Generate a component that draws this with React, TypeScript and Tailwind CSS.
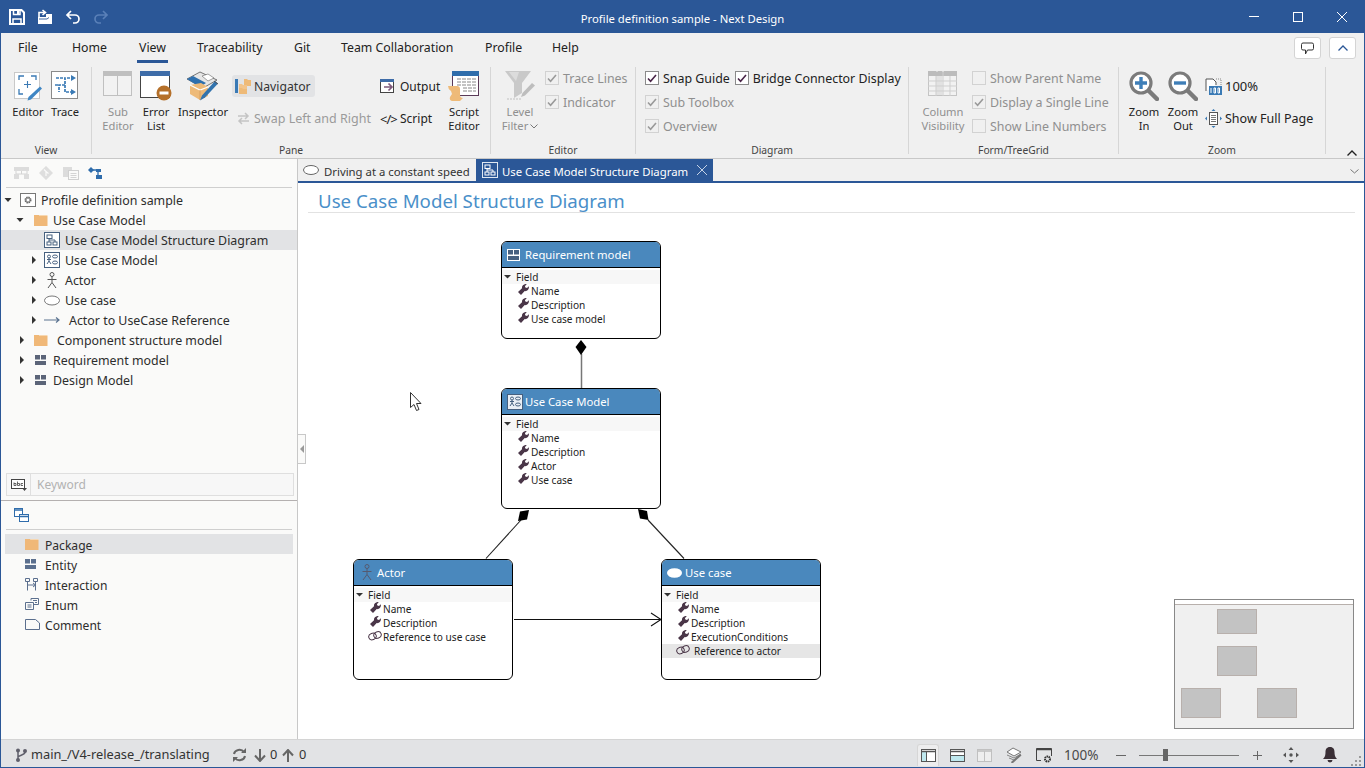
import React from "react";

const B = "#2b5797";

function IconSave() {
  return (
    <svg width="16" height="16" viewBox="0 0 16 16" fill="none">
      <path d="M1 1h11.500L15 3.500V15H1z" stroke="#fff" strokeWidth="2" />
      <path d="M4.500 1v4.500h6.500V1" stroke="#fff" strokeWidth="1.500" />
      <path d="M4 15V10h8v5" stroke="#fff" strokeWidth="1.500" />
      <rect x="8" y="2" width="2" height="3" fill="#fff" />
    </svg>
  );
}
function IconOpen() {
  return (
    <svg width="16" height="16" viewBox="0 0 16 16" fill="none">
      <path d="M1 8V15H15V5H9V8Z" fill="#fff" />
      <path d="M2 10h8l2-1.500" stroke={B} strokeWidth="0.900" />
      <path d="M2 8V3.500H8M5.500 1 8.500 3.500 5.500 6" stroke="#fff" strokeWidth="1.600" />
    </svg>
  );
}
function IconUndo({ dim }: { dim?: boolean }) {
  return (
    <svg width="16" height="16" viewBox="0 0 16 16" fill="none" className={dim ? "-scale-x-100" : ""}>
      <path d="M6 2 2 6l4 4M2 6h8a4 4 0 0 1 0 8H8" stroke={dim ? "#5a80b8" : "#fff"} strokeWidth="1.700" />
    </svg>
  );
}
function IconEditorBig() {
  return (
    <svg width="30" height="30" viewBox="0 0 30 30" fill="none">
      <rect x="1.500" y="1.500" width="25" height="26" fill="#fff" stroke="#9a9a9a" strokeDasharray="1 1" />
      <path d="M6 9V5h5M18 5h5v4M6 18v5h4" stroke="#3a7ab5" strokeWidth="1.300" />
      <path d="M14.500 10v7M11 13.500h7" stroke="#3a7ab5" strokeWidth="1.100" />
      <path d="M27 15.500l2 2-11 11-3.500 1 1-3.500z" fill="#3f86c4" />
    </svg>
  );
}
function IconTraceBig() {
  return (
    <svg width="28" height="28" viewBox="0 0 28 28" fill="none">
      <rect x="0.500" y="0.500" width="26" height="27" fill="#fff" stroke="#8a8a8a" />
      <path d="M5 7h9v14h7M14 14H8v7M4 14h4M16 7h5" stroke="#3a7ab5" strokeWidth="1.700" strokeDasharray="3 1" />
      <path d="M20 4l5 3-5 3zM20 18l5 3-5 3z" fill="#3a7ab5" />
    </svg>
  );
}
function IconSubEditor() {
  return (
    <svg width="30" height="26" viewBox="0 0 30 26" fill="none">
      <rect x="0.500" y="0.500" width="28" height="24" fill="#f2f2f2" stroke="#c0c0c0" />
      <rect x="0" y="0" width="29" height="5" fill="#bfbfbf" />
      <path d="M14.500 5v20" stroke="#c0c0c0" />
    </svg>
  );
}
function IconErrorList() {
  return (
    <svg width="32" height="30" viewBox="0 0 32 30" fill="none">
      <rect x="0.500" y="0.500" width="29" height="26" fill="#fff" stroke="#444" />
      <rect x="0" y="0" width="30" height="5" fill="#3e6ca8" />
      <circle cx="24" cy="22" r="7.500" fill="#b5702a" />
      <rect x="19.500" y="20.500" width="9" height="3" fill="#fff" />
    </svg>
  );
}
function IconInspector() {
  return (
    <svg width="34" height="32" viewBox="0 0 34 32" fill="none">
      <path d="M1 8L14 1l17 8-14 8z" fill="#e6e6e6" stroke="#555" strokeWidth="0.800" />
      <path d="M1 8l6-3 13 7-6 4z" fill="#2f70ae" />
      <path d="M16 5l6-2 6 4-6 3z" fill="#fff" stroke="#666" strokeWidth="0.600" />
      <path d="M4 14l11-2 7 4v9l-8 4-10-6z" fill="#eeba78" />
      <path d="M4 14l10 5 8-3" stroke="#fff" strokeWidth="1.200" />
      <path d="M14 19v10" stroke="#d9a15e" />
      <path d="M29 10l3 2.500-13 14-5 3 2-5z" fill="#3273ad" />
      <path d="M28 10l4 3" stroke="#555" />
    </svg>
  );
}
function IconNavigator() {
  return (
    <svg width="17" height="17" viewBox="0 0 17 17" fill="none">
      <rect x="0" y="1" width="3" height="14" fill="#3a7ab5" />
      <path d="M9 1h3l1 1h3v6H9z" fill="#eeba78" />
      <path d="M4 6h3l1 1h4v8H4z" fill="#f2c48c" />
      <path d="M4 10h3l1 1h4v5H4z" fill="#eeba78" />
    </svg>
  );
}
function IconOutput() {
  return (
    <svg width="16" height="15" viewBox="0 0 16 15" fill="none">
      <rect x="0.500" y="0.500" width="13" height="13" fill="#fff" stroke="#444" />
      <rect x="0" y="0" width="14" height="3" fill="#3e6ca8" />
      <path d="M4 8h7M8.500 4.500L12 8 8.500 11.500" stroke="#7e5a7c" strokeWidth="1.700" />
    </svg>
  );
}
function IconScriptEditor() {
  return (
    <svg width="32" height="32" viewBox="0 0 32 32" fill="none">
      <rect x="4.500" y="0.500" width="26" height="24" fill="#fff" stroke="#5a3a58" />
      <rect x="4" y="0" width="27" height="5" fill="#2f6dab" />
      <path d="M9 8h19M9 11h19M9 14h19M15 17h13M15 20h13" stroke="#888" strokeDasharray="4 1" />
      <path d="M0 15h9q3 0 3 3v6q0 3 3 3l-3 3H4q-3-1-2-4l2-3-1-3q-3-2-3-5z" fill="#eeba78" />
    </svg>
  );
}
function IconFunnel() {
  return (
    <svg width="32" height="30" viewBox="0 0 32 30" fill="none">
      <path d="M1 0h26L18 12v10l-8 5V12z" fill="#c9c9c9" />
      <path d="M5 1h10L12 10z" fill="#dcdcdc" />
      <path d="M28 12l3 2.500-10 10-4 1.500 1.500-4z" fill="#bdbdbd" />
      <path d="M3 28h14" stroke="#c0c0c0" strokeDasharray="2 1" />
    </svg>
  );
}
function IconColumns() {
  return (
    <svg width="30" height="26" viewBox="0 0 30 26" fill="none">
      <rect x="0.500" y="0.500" width="28" height="24" fill="#f2f2f2" stroke="#c4c4c4" />
      <rect x="0" y="0" width="29" height="5" fill="#bcbcbc" />
      <rect x="8" y="0" width="6" height="25" fill="#bcbcbc" opacity="0.300" />
      <path d="M0 10h29M0 15h29M0 20h29M8 5v20M15 0v25M22 5v20" stroke="#cfcfcf" />
      <path d="M8 0h2M14 0h2" stroke="#eee" />
    </svg>
  );
}
function IconZoom({ plus }: { plus?: boolean }) {
  return (
    <svg width="30" height="30" viewBox="0 0 30 30" fill="none">
      <path d="M19 19l9 9" stroke="#7b7b7b" strokeWidth="4.500" strokeLinecap="round" />
      <circle cx="12" cy="12" r="10" fill="#fff" stroke="#7b7b7b" strokeWidth="3.200" />
      <path d={plus ? "M6 12h12M12 6v12" : "M6 12h12"} stroke="#3f7fb8" strokeWidth="3.400" />
    </svg>
  );
}
function IconPage100() {
  return (
    <svg width="17" height="17" viewBox="0 0 17 17" fill="none">
      <path d="M1 13V1h7l3 3v3" stroke="#555" fill="#fff" />
      <path d="M11 1h5v6" stroke="#888" strokeDasharray="1 1" />
      <rect x="4" y="8" width="13" height="9" fill="#3a7ab5" />
      <path d="M6 10v5M9 10h1.500v5H9zM13 10h1.500v5H13z" stroke="#fff" />
    </svg>
  );
}
function IconFullPage() {
  return (
    <svg width="17" height="19" viewBox="0 0 17 19" fill="none">
      <rect x="4.500" y="3.500" width="8" height="12" fill="#fff" stroke="#555" />
      <path d="M6 6.500h5M6 8.500h5M6 10.500h5M6 12.500h5" stroke="#777" />
      <path d="M8.500 0l2 2h-4zM8.500 19l2-2h-4zM0 9.500l2-2v4zM17 9.500l-2-2v4z" fill="#3a7ab5" />
    </svg>
  );
}
function Check({ on, dis }: { on?: boolean; dis?: boolean }) {
  const box = dis
    ? "w-[14px] h-[14px] border border-[#d2d2d2] bg-[#f0f0f0] shrink-0 flex items-center justify-center"
    : "w-[14px] h-[14px] border border-[#8b8b8b] bg-white shrink-0 flex items-center justify-center";
  return (
    <span className={box}>
      {on && (
        <svg width="10" height="9" viewBox="0 0 10 9" fill="none">
          <path d="M1 4.500 3.600 7.300 9 1" stroke={dis ? "#9a9a9a" : "#4a2548"} strokeWidth="1.600" />
        </svg>
      )}
    </span>
  );
}
function CheckRow({ on, dis, label }: { on?: boolean; dis?: boolean; label: string }) {
  return (
    <div className={dis ? "h-[22px] flex items-center gap-[4px] text-[#8f8f8f]" : "h-[22px] flex items-center gap-[4px] text-[#222]"}>
      <Check on={on} dis={dis} />
      <span className="whitespace-nowrap text-[12.4px] pt-[2px]">{label}</span>
    </div>
  );
}
function Big({ w, icon, l1, l2, dis }: { w: string; icon: React.ReactNode; l1: React.ReactNode; l2?: React.ReactNode; dis?: boolean }) {
  return (
    <div className={`${w} flex flex-col items-center shrink-0 text-[11.2px] ${dis ? "text-[#8f8f8f]" : "text-[#222]"}`}>
      <div className="h-[38px] pt-[4px] flex items-start justify-center">{icon}</div>
      <div className="leading-[14px] text-center whitespace-nowrap">{l1}</div>
      {l2 && <div className="leading-[14px] text-center whitespace-nowrap">{l2}</div>}
    </div>
  );
}
function Group({ w, title, children }: { w: string; title: string; children: React.ReactNode }) {
  return (
    <div className={`${w} h-[91px] shrink-0 flex flex-col`}>
      <div className="h-[76px] flex items-start">{children}</div>
      <div className="h-[14px] leading-[14px] text-center text-[#444] text-[10.3px]">{title}</div>
    </div>
  );
}
function Sep() {
  return <div className="w-px h-[87px] bg-[#d6d6d6] shrink-0" />;
}

function Ribbon() {
  return (
    <div className="bg-[#f0f0f0] text-[12px]">
      <div className="h-[30px] flex items-start text-[#222] text-[12.3px]">
        <div className="w-[54px] ml-[17px] pt-[7px] leading-4">File</div>
        <div className="w-[65px] pt-[7px] leading-4">Home</div>
        <div className="w-[31px] h-[30px] pt-[7px] leading-4 text-center border-b-[3px] border-[#2b5797]">View</div>
        <div className="w-[97px] ml-[29px] pt-[7px] leading-4">Traceability</div>
        <div className="w-[47px] pt-[7px] leading-4">Git</div>
        <div className="w-[144px] pt-[7px] leading-4 whitespace-nowrap">Team Collaboration</div>
        <div className="w-[67px] pt-[7px] leading-4">Profile</div>
        <div className="pt-[7px] leading-4">Help</div>
        <div className="ml-auto mr-[8px] mt-[4px] flex gap-[8px]">
          <div className="w-[27px] h-[22px] bg-white border border-[#d4d4d4] rounded-[3px] flex items-center justify-center">
            <svg width="13" height="13" viewBox="0 0 13 13" fill="none">
              <path d="M2 1h9a1.500 1.500 0 0 1 1.500 1.500v4A1.500 1.500 0 0 1 11 8H6.500L4.500 12V8H2A1.500 1.500 0 0 1 .5 6.500v-4A1.500 1.500 0 0 1 2 1z" stroke="#333" />
            </svg>
          </div>
          <div className="w-[27px] h-[22px] bg-white border border-[#d4d4d4] rounded-[3px] flex items-center justify-center">
            <svg width="10" height="6" viewBox="0 0 10 6" fill="none">
              <path d="M.5 5.500 5 1l4.500 4.500" stroke="#2b5797" strokeWidth="1.300" />
            </svg>
          </div>
        </div>
      </div>
      <div className="h-[95px] pt-[4px] flex items-start">
        <Group w="w-[90px]" title="View">
          <div className="ml-[10px]" />
          <Big w="w-[34px]" icon={<IconEditorBig />} l1="Editor" />
          <div className="ml-[3px]" />
          <Big w="w-[34px]" icon={<IconTraceBig />} l1="Trace" />
        </Group>
        <Sep />
        <Group w="w-[398px]" title="Pane">
          <div className="ml-[6px]" />
          <Big w="w-[40px]" dis icon={<IconSubEditor />} l1="Sub" l2="Editor" />
          <Big w="w-[36px]" icon={<IconErrorList />} l1="Error" l2="List" />
          <Big w="w-[58px]" icon={<IconInspector />} l1="Inspector" />
          <div className="w-[148px] pt-[8px] shrink-0">
            <div className="w-[83px] h-[22px] bg-[#e2e3e5] rounded-[3px] flex items-center pl-[3px] gap-[2px] text-[#333]">
              <IconNavigator />
              <span className="text-[12.2px] pt-[2px]">Navigator</span>
            </div>
            <div className="h-[22px] mt-[10px] flex items-center pl-[5px] gap-[4px] text-[#9b9b9b] whitespace-nowrap">
              <svg width="13" height="13" viewBox="0 0 13 13" fill="none">
                <path d="M1 4h10M8 1l3 3-3 3M12 9H2M5 6 2 9l3 3" stroke="#c4c4c4" strokeWidth="1.500" />
              </svg>
              <span className="text-[12.5px] pt-[2px]">Swap Left and Right</span>
            </div>
          </div>
          <div className="w-[64px] pt-[8px] shrink-0 text-[#222]">
            <div className="h-[22px] flex items-center gap-[4px]">
              <IconOutput />
              <span className="pt-[2px]">Output</span>
            </div>
            <div className="h-[22px] mt-[10px] flex items-center gap-[4px]">
              <span className="w-[16px] text-[13px] leading-none text-center tracking-[-1px] whitespace-nowrap pt-[2px]">&lt;/&gt;</span>
              <span className="pt-[2px]">Script</span>
            </div>
          </div>
          <Big w="w-[40px]" icon={<IconScriptEditor />} l1="Script" l2="Editor" />
        </Group>
        <Sep />
        <Group w="w-[144px]" title="Editor">
          <div className="ml-[9px]" />
          <Big
            w="w-[40px]"
            dis
            icon={<IconFunnel />}
            l1="Level"
            l2={
              <span className="inline-flex items-center gap-[2px]">
                Filter
                <svg width="8" height="5" viewBox="0 0 8 5" fill="none">
                  <path d="M.5.5 4 4 7.500.5" stroke="#777" />
                </svg>
              </span>
            }
          />
          <div className="ml-[5px] flex flex-col gap-[2px]">
            <CheckRow on dis label="Trace Lines" />
            <CheckRow on dis label="Indicator" />
          </div>
        </Group>
        <Sep />
        <Group w="w-[272px]" title="Diagram">
          <div className="ml-[9px] flex flex-col gap-[2px]">
            <div className="flex gap-[5px]">
              <CheckRow on label="Snap Guide" />
              <CheckRow on label="Bridge Connector Display" />
            </div>
            <CheckRow on dis label="Sub Toolbox" />
            <CheckRow on dis label="Overview" />
          </div>
        </Group>
        <Sep />
        <Group w="w-[209px]" title="Form/TreeGrid">
          <div className="ml-[5px]" />
          <Big w="w-[58px]" dis icon={<IconColumns />} l1="Column" l2="Visibility" />
          <div className="flex flex-col gap-[2px]">
            <CheckRow dis label="Show Parent Name" />
            <CheckRow on dis label="Display a Single Line" />
            <CheckRow dis label="Show Line Numbers" />
          </div>
        </Group>
        <Sep />
        <Group w="w-[206px]" title="Zoom">
          <div className="ml-[6px]" />
          <Big w="w-[38px]" icon={<IconZoom plus />} l1="Zoom" l2="In" />
          <div className="ml-[1px]" />
          <Big w="w-[38px]" icon={<IconZoom />} l1="Zoom" l2="Out" />
          <div className="ml-[3px] pt-[8px] text-[#222]">
            <div className="h-[22px] flex items-center gap-[3px]">
              <IconPage100 />
              <span className="text-[13px] pt-[2px]">100%</span>
            </div>
            <div className="h-[22px] mt-[10px] flex items-center gap-[3px] whitespace-nowrap">
              <IconFullPage />
              <span className="text-[12.5px] pt-[2px]">Show Full Page</span>
            </div>
          </div>
        </Group>
        <Sep />
        <svg className="ml-[21px] mt-[83px]" width="10" height="6" viewBox="0 0 10 6" fill="none">
          <path d="M.5 5.500 5 1l4.500 4.500" stroke="#222" strokeWidth="1.400" />
        </svg>
      </div>
    </div>
  );
}

function ArrowDown() {
  return (
    <svg width="12" height="8" viewBox="0 0 12 8">
      <path d="M2.500 2h7L6 6z" fill="#333" />
    </svg>
  );
}
function ArrowRight() {
  return (
    <svg width="12" height="10" viewBox="0 0 12 10">
      <path d="M4 1l4 4-4 4z" fill="#333" />
    </svg>
  );
}
function Folder() {
  return (
    <svg width="14" height="12" viewBox="0 0 14 12">
      <path d="M0 1h5l1 1h7.500v10H0z" fill="#f0b878" />
      <path d="M5 1h8.500v1H6z" fill="#f7d7b0" />
    </svg>
  );
}
function DiagramIcon() {
  return (
    <svg width="16" height="16" viewBox="0 0 16 16" fill="none">
      <rect x=".5" y=".5" width="15" height="15" stroke="#46607f" fill="#fff" />
      <rect x="3" y="3" width="5" height="3.500" stroke="#46607f" />
      <rect x="3" y="10" width="4" height="3" stroke="#46607f" />
      <rect x="9" y="10" width="4" height="3" stroke="#46607f" />
      <path d="M5 6.500V10M5 8h6v2" stroke="#46607f" />
    </svg>
  );
}
function UCMIcon({ c = "#46607f", bg = "#fff" }: { c?: string; bg?: string }) {
  return (
    <svg width="16" height="16" viewBox="0 0 16 16" fill="none">
      <rect x=".5" y=".5" width="15" height="15" stroke={c} fill={bg} />
      <circle cx="5" cy="4.500" r="1.500" stroke={c} />
      <path d="M5 6v3M3 7.500h4M3 12l2-3 2 3" stroke={c} />
      <ellipse cx="11" cy="4.500" rx="2.500" ry="1.500" stroke={c} />
      <ellipse cx="11" cy="10.500" rx="2.500" ry="1.500" stroke={c} />
    </svg>
  );
}
function ActorIcon({ c = "#555" }: { c?: string }) {
  return (
    <svg width="10" height="17" viewBox="0 0 10 17" fill="none">
      <circle cx="5" cy="2.500" r="2" stroke={c} />
      <path d="M5 4.500v6M.5 7.500h9M1 16l4-5.500L9 16" stroke={c} />
    </svg>
  );
}
function EllipseIcon() {
  return (
    <svg width="16" height="11" viewBox="0 0 16 11" fill="none">
      <ellipse cx="8" cy="5.500" rx="7.500" ry="4.500" stroke="#777" fill="#fff" />
    </svg>
  );
}
function RefArrow() {
  return (
    <svg width="16" height="8" viewBox="0 0 16 8" fill="none">
      <path d="M0 4h15M12 1.500 15 4l-3 2.500" stroke="#5b7390" strokeWidth="1.200" />
    </svg>
  );
}
function EntityIcon({ c = "#5b6478" }: { c?: string }) {
  return (
    <svg width="11" height="10" viewBox="0 0 11 10">
      <rect width="5" height="4.500" fill={c} />
      <rect x="6" width="5" height="4.500" fill={c} />
      <rect y="6" width="11" height="4" fill={c} />
    </svg>
  );
}
function EntityHeader() {
  return (
    <svg width="13" height="12" viewBox="0 0 13 12">
      <rect width="13" height="12" fill="#fff" />
      <rect x="1" y="1" width="5" height="4.500" fill="#46607f" />
      <rect x="7" y="1" width="5" height="4.500" fill="#46607f" />
      <rect x="1" y="7" width="11" height="4" fill="#46607f" />
    </svg>
  );
}
function ProfileIcon() {
  return (
    <svg width="16" height="14" viewBox="0 0 16 14" fill="none">
      <rect x=".5" y=".5" width="15" height="13" stroke="#777" fill="#fff" />
      <circle cx="8" cy="7" r="2.800" stroke="#666" strokeWidth="1.400" strokeDasharray="1.500 .7" />
      <circle cx="8" cy="7" r="2" stroke="#666" strokeWidth="0.800" />
    </svg>
  );
}

function TreeRow({ pl, slot, ipl, arrow, icon, text, sel }: { pl: string; slot: string; ipl: string; arrow?: "d" | "r"; icon: React.ReactNode; text: string; sel?: boolean }) {
  return (
    <div className={`h-[20px] flex items-center ${pl} ${sel ? "bg-[#e2e3e5]" : ""}`}>
      <span className="w-[12px] shrink-0 flex justify-center">{arrow === "d" ? <ArrowDown /> : arrow === "r" ? <ArrowRight /> : null}</span>
      <span className={`${slot} ${ipl} shrink-0 flex items-center`}>{icon}</span>
      <span className="whitespace-nowrap text-[12.4px] pt-[2px]">{text}</span>
    </div>
  );
}
function ToolRow({ icon, text, sel }: { icon: React.ReactNode; text: string; sel?: boolean }) {
  return (
    <div className={`h-[20px] flex items-center mx-[4px] w-[288px] ${sel ? "bg-[#e2e3e5]" : ""}`}>
      <span className="w-[40px] pl-[20px] shrink-0 flex items-center">{icon}</span>
      <span className="text-[12.1px] pt-[4px]">{text}</span>
    </div>
  );
}

function LeftPanel() {
  return (
    <div className="w-[297px] shrink-0 h-full bg-[#fafaf9] border-r border-[#c8c8c8] flex flex-col text-[12px] text-[#2d2d2d]">
      <div className="flex-1 flex flex-col min-h-0">
        <div className="h-[28px] flex items-center pl-[13px] gap-[10px] shrink-0">
          <svg width="15" height="12" viewBox="0 0 15 12" fill="none">
            <rect x="0" y="0" width="15" height="4" fill="#dcdcdc" />
            <path d="M2 4v3h11V4M7.500 4v3" stroke="#d4d4d4" />
            <rect x="0" y="7" width="5" height="5" fill="#dcdcdc" />
            <rect x="10" y="7" width="5" height="5" fill="#dcdcdc" />
          </svg>
          <svg width="14" height="14" viewBox="0 0 14 14">
            <rect x="2" y="2" width="10" height="10" fill="#dedede" transform="rotate(45 7 7)" />
            <path d="M5 3.500 7 5.500V10M7 5.500l2.500 2" stroke="#fafaf9" strokeWidth="1.200" fill="none" />
          </svg>
          <svg width="16" height="14" viewBox="0 0 16 14" fill="none">
            <rect x="0" y="1" width="9" height="10" fill="#dcdcdc" />
            <rect x="5.500" y="4.500" width="10" height="9" fill="#fafaf9" stroke="#d0d0d0" />
            <path d="M7.500 7.500h6M7.500 9.500h6M7.500 11.500h6" stroke="#d4d4d4" />
          </svg>
          <svg width="15" height="15" viewBox="0 0 15 15" fill="none" className="-ml-[1px]">
            <path d="M0 4 3 1l3 3-3 3z" fill="#2f6cab" />
            <path d="M4 4h6v7" stroke="#2f6cab" strokeWidth="1.300" />
            <path d="M8 3h5v3H8zM8 9h6v4H8z" fill="#2f6cab" />
          </svg>
        </div>
        <div className="h-px bg-[#cfcfcf] mx-[5px] w-[286px] shrink-0" />
        <div className="pt-[2px]">
          <TreeRow pl="pl-[1px]" slot="w-[27px]" ipl="pl-[6px]" arrow="d" icon={<ProfileIcon />} text="Profile definition sample" />
          <TreeRow pl="pl-[13px]" slot="w-[27px]" ipl="pl-[8px]" arrow="d" icon={<Folder />} text="Use Case Model" />
          <TreeRow sel pl="pl-[27px]" slot="w-[25px]" ipl="pl-[4px]" icon={<DiagramIcon />} text="Use Case Model Structure Diagram" />
          <TreeRow pl="pl-[27px]" slot="w-[25px]" ipl="pl-[4px]" arrow="r" icon={<UCMIcon />} text="Use Case Model" />
          <TreeRow pl="pl-[27px]" slot="w-[25px]" ipl="pl-[7px]" arrow="r" icon={<ActorIcon />} text="Actor" />
          <TreeRow pl="pl-[27px]" slot="w-[25px]" ipl="pl-[4px]" arrow="r" icon={<EllipseIcon />} text="Use case" />
          <TreeRow pl="pl-[27px]" slot="w-[29px]" ipl="pl-[4px]" arrow="r" icon={<RefArrow />} text="Actor to UseCase Reference" />
          <TreeRow pl="pl-[15px]" slot="w-[29px]" ipl="pl-[6px]" arrow="r" icon={<Folder />} text="Component structure model" />
          <TreeRow pl="pl-[15px]" slot="w-[25px]" ipl="pl-[7px]" arrow="r" icon={<EntityIcon />} text="Requirement model" />
          <TreeRow pl="pl-[15px]" slot="w-[25px]" ipl="pl-[7px]" arrow="r" icon={<EntityIcon />} text="Design Model" />
        </div>
        <div className="flex-1" />
        <div className="h-[23px] mx-[5px] w-[288px] mb-[4px] border border-[#dfdfdf] bg-[#f7f7f7] flex items-center shrink-0">
          <span className="w-[24px] h-full border-r border-[#dfdfdf] flex items-center justify-center">
            <svg width="16" height="13" viewBox="0 0 16 13" fill="none">
              <rect x=".5" y="1.500" width="13" height="9" stroke="#444" fill="#fff" />
              <path d="M3 4.500v3h2v-2H3M6.500 3.500v4h2v-2h-2M12 5.500h-2v2h2" stroke="#444" strokeWidth="0.800" />
              <path d="M11 10h5l-2.500 3z" fill="#444" />
            </svg>
          </span>
          <span className="pl-[6px] text-[#b2b2b2]">Keyword</span>
        </div>
      </div>
      <div className="h-[239px] shrink-0 border-t border-[#b4b0b0]">
        <div className="h-[28px] flex items-center pl-[13px]">
          <svg width="15" height="14" viewBox="0 0 15 14" fill="none">
            <rect x=".5" y=".5" width="8" height="8" stroke="#2f6cab" fill="#fff" />
            <rect x="5.500" y="6.500" width="9" height="7" stroke="#2f6cab" fill="#fff" />
            <path d="M.5 2h8M5.500 8.500h9" stroke="#2f6cab" strokeWidth="1.500" />
          </svg>
        </div>
        <div className="h-px bg-[#cfcfcf] mx-[5px] w-[286px]" />
        <div className="pt-[4px]">
          <ToolRow sel icon={<Folder />} text="Package" />
          <ToolRow icon={<EntityIcon c="#5b6f8e" />} text="Entity" />
          <ToolRow
            icon={
              <svg width="14" height="13" viewBox="0 0 14 13" fill="none">
                <path d="M.5.5h4v3h-4zM8.500.5h4v3h-4zM2.500 3.500v9M10.500 3.500v9M2.500 7h8M8 5l2.500 2L8 9" stroke="#5b6f8e" />
              </svg>
            }
            text="Interaction"
          />
          <ToolRow
            icon={
              <svg width="14" height="12" viewBox="0 0 14 12" fill="none">
                <path d="M.5 4.500h8v7h-8zM2.500 7h4M2.500 9h4M6 2.500V.5h7.500v6H9M8 2.500h4M10 4.500h2" stroke="#5b6f8e" />
              </svg>
            }
            text="Enum"
          />
          <ToolRow
            icon={
              <svg width="15" height="11" viewBox="0 0 15 11" fill="none">
                <path d="M.500.500h10l4 3.500v6.500H.500z" stroke="#5b6f8e" />
              </svg>
            }
            text="Comment"
          />
        </div>
      </div>
    </div>
  );
}

function Wrench() {
  return (
    <svg width="11" height="11" viewBox="0 0 11 11" className="shrink-0">
      <path d="M0 8 4 4.300C3.500 1.800 6 -.4 8.800 0L6.900 2.200 7.400 3.600 9 4.100 10.900 2.300C11.400 5.500 8.800 7.800 6.700 7.100L3 11z" fill="#4a3648" />
    </svg>
  );
}
function LinkIcon() {
  return (
    <svg width="14" height="10" viewBox="0 0 14 10" fill="none" className="shrink-0">
      <ellipse cx="4.500" cy="5.500" rx="3.800" ry="3.200" stroke="#4a3648" transform="rotate(-20 4.500 5.500)" />
      <ellipse cx="9.500" cy="4" rx="3.800" ry="3.200" stroke="#4a3648" transform="rotate(-20 9.500 4)" />
    </svg>
  );
}
type F = { t: string; link?: boolean; sel?: boolean };
function Node({ pos, title, icon, fields }: { pos: string; title: string; icon: React.ReactNode; fields: F[] }) {
  return (
    <div className={`absolute ${pos} w-[160px] bg-white border border-black rounded-[6px] overflow-hidden text-[10.1px] text-[#222]`}>
      <div className="h-[26px] bg-[#4a88bd] border-b border-black flex items-center text-white text-[11.3px]">
        <span className="w-[23px] pl-[5px] shrink-0 flex items-center">{icon}</span>
        <span className="pt-[2px]">{title}</span>
      </div>
      <div className="mt-[2px] h-[14px] bg-[#f7f7f7] flex items-center leading-[14px]">
        <span className="w-[14px] shrink-0 flex items-center">
          <svg width="10" height="6" viewBox="0 0 10 6" className="ml-[1px]">
            <path d="M1 1h7L4.500 4.500z" fill="#333" />
          </svg>
        </span>
        <span>Field</span>
      </div>
      {fields.map((f) => (
        <div key={f.t} className={`h-[14px] flex items-center leading-[14px] whitespace-nowrap ${f.sel ? "bg-[#e6e6e6]" : ""}`}>
          <span className={`${f.link ? "pl-[14px]" : "pl-[16px]"} ${f.sel ? "w-[32px]" : "w-[29px]"} shrink-0 flex items-center -mt-[3px]`}>{f.link ? <LinkIcon /> : <Wrench />}</span>
          <span>{f.t}</span>
        </div>
      ))}
    </div>
  );
}

function Canvas() {
  return (
    <div className="flex-1 relative bg-white min-h-0 overflow-hidden">
      <div className="pt-[7px] pl-[20px] text-[18.7px] leading-[22px] text-[#4a8fc9]">Use Case Model Structure Diagram</div>
      <div className="h-px bg-[#e2e2e2] ml-[10px] mr-[9px]" />
      <svg className="absolute inset-0 pointer-events-none" width="1066" height="556" viewBox="298 183 1066 556" fill="none">
        <path d="M581.500 354V388" stroke="#777" strokeWidth="1.500" />
        <path d="M581 340l5.500 7-5.500 8-5.500-8z" fill="#000" />
        <path d="M486 558.500 521 520" stroke="#222" strokeWidth="1.100" />
        <path d="M529 510l-2 9.500-9 1.500 2-9.500z" fill="#000" />
        <path d="M684 558.500 648 520" stroke="#222" strokeWidth="1.100" />
        <path d="M638 509l9 2 1.500 9-8.500-1.500z" fill="#000" />
        <path d="M514 619.500h147M651 613l10 6.500-10 6.500" stroke="#111" strokeWidth="1.100" />
        <path d="M410.500 392.500v15l3.500-3 2.500 6 2.500-1-2.500-6h4.500z" fill="#fff" stroke="#333" />
      </svg>
      <Node
        pos="left-[203px] top-[58px] h-[98px]"
        title="Requirement model"
        icon={<EntityHeader />}
        fields={[{ t: "Name" }, { t: "Description" }, { t: "Use case model" }]}
      />
      <Node
        pos="left-[203px] top-[205px] h-[121px]"
        title="Use Case Model"
        icon={<UCMIcon c="#46607f" bg="#e9eef4" />}
        fields={[{ t: "Name" }, { t: "Description" }, { t: "Actor" }, { t: "Use case" }]}
      />
      <Node
        pos="left-[55px] top-[376px] h-[121px]"
        title="Actor"
        icon={<span className="pl-[3px]"><ActorIcon c="#555a70" /></span>}
        fields={[{ t: "Name" }, { t: "Description" }, { t: "Reference to use case", link: true }]}
      />
      <Node
        pos="left-[363px] top-[376px] h-[121px]"
        title="Use case"
        icon={
          <svg width="15" height="10" viewBox="0 0 15 10">
            <ellipse cx="7.500" cy="5" rx="7.500" ry="4.800" fill="#fff" />
          </svg>
        }
        fields={[{ t: "Name" }, { t: "Description" }, { t: "ExecutionConditions" }, { t: "Reference to actor", link: true, sel: true }]}
      />
      <div className="absolute left-0 top-[251px] w-[8px] h-[30px] bg-[#fafaf9] border border-l-0 border-[#c8c8c8] flex items-center justify-center">
        <svg width="4" height="8" viewBox="0 0 4 8">
          <path d="M4 0v8L0 4z" fill="#999" />
        </svg>
      </div>
      <div className="absolute left-[876px] top-[416px] w-[180px] h-[130px] border border-[#888] bg-[#f0f0f0]">
        <div className="h-[4px] bg-white border-b border-[#b8b0ac] box-content" />
        <div className="absolute left-[42px] top-[9px] w-[40px] h-[25px] bg-[#c3c3c3] border border-[#b8b0ac]" />
        <div className="absolute left-[42px] top-[46px] w-[40px] h-[30px] bg-[#c3c3c3] border border-[#b8b0ac]" />
        <div className="absolute left-[6px] top-[88px] w-[40px] h-[30px] bg-[#c3c3c3] border border-[#b8b0ac]" />
        <div className="absolute left-[82px] top-[88px] w-[40px] h-[30px] bg-[#c3c3c3] border border-[#b8b0ac]" />
      </div>
    </div>
  );
}

function StatusBar() {
  return (
    <div className="h-[28px] shrink-0 bg-[#e2e3e5] border-t border-[#d4d4d4] pt-[3px] flex items-center text-[12.8px] text-[#333]">
      <svg className="ml-[14px]" width="12" height="14" viewBox="0 0 12 14" fill="none">
        <circle cx="3" cy="2.500" r="2" fill="#5f5f6b" />
        <circle cx="3" cy="12" r="2" fill="#5f5f6b" />
        <circle cx="10" cy="3" r="2" fill="#5f5f6b" />
        <path d="M3 3v8M10 4c0 3-5 3-7 5" stroke="#5f5f6b" strokeWidth="1.500" />
      </svg>
      <span className="ml-[4px] w-[201px] whitespace-nowrap">main_/V4-release_/translating</span>
      <svg width="15" height="14" viewBox="0 0 15 14" fill="none">
        <path d="M2 6a5.500 5 0 0 1 10-2M13 8a5.500 5 0 0 1-10 2" stroke="#666" strokeWidth="2" />
        <path d="M9 5h5V0zM6 9H1v5z" fill="#666" />
      </svg>
      <svg className="ml-[7px]" width="12" height="13" viewBox="0 0 12 13" fill="none">
        <path d="M6 0v11M1 6.500 6 12l5-5.500" stroke="#666" strokeWidth="2" />
      </svg>
      <span className="ml-[4px] w-[12px]">0</span>
      <svg width="12" height="13" viewBox="0 0 12 13" fill="none">
        <path d="M6 13V2M1 6.500 6 1l5 5.500" stroke="#666" strokeWidth="2" />
      </svg>
      <span className="ml-[5px]">0</span>
      <div className="ml-auto flex items-center h-full">
        <div className="w-[22px] h-[22px] bg-[#ededee] border border-[#d6d6d6] border-b-0 rounded-t-[3px] flex items-center justify-center">
          <svg width="15" height="13" viewBox="0 0 15 13" fill="none">
            <rect x=".5" y=".5" width="14" height="12" stroke="#555" fill="#fff" />
            <rect x="1" y="3" width="4" height="9" fill="#bfe8ee" />
            <path d="M1 2.500h13" stroke="#555" strokeWidth="1.500" />
            <path d="M5.500 3v9" stroke="#555" />
          </svg>
        </div>
        <svg className="ml-[11px]" width="15" height="13" viewBox="0 0 15 13" fill="none">
          <rect x=".5" y=".5" width="14" height="12" stroke="#555" fill="#fff" />
          <rect x="1" y="7" width="13" height="5" fill="#bfe8ee" />
          <path d="M1 2.500h13" stroke="#555" strokeWidth="1.500" />
          <path d="M1 6.500h13" stroke="#555" />
        </svg>
        <svg className="ml-[12px]" width="15" height="13" viewBox="0 0 15 13" fill="none">
          <rect x=".5" y=".5" width="14" height="12" stroke="#c0c0c0" fill="#eee" />
          <path d="M1 2h13" stroke="#bdbdbd" strokeWidth="1.500" />
          <path d="M7.500 2v10" stroke="#c0c0c0" />
        </svg>
        <svg className="ml-[14px]" width="16" height="16" viewBox="0 0 16 16" fill="none">
          <path d="M1 5 7 1l8 4-7 4z" fill="#fff" stroke="#777" />
          <path d="M1 8l7 3 7-4M3 11l5 2" stroke="#888" />
          <path d="M14 7l1.500 1.500L7 16l-2 .5.500-2z" fill="#777" />
        </svg>
        <svg className="ml-[14px]" width="16" height="16" viewBox="0 0 16 16" fill="none">
          <path d="M5 13.500H.5v-12h15V9" stroke="#444" />
          <path d="M.500 2.500h15" stroke="#444" strokeWidth="1.500" />
          <circle cx="11.500" cy="12" r="2.500" stroke="#333" strokeWidth="2" strokeDasharray="1.500 .6" />
        </svg>
        <span className="ml-[12px] w-[36px] text-[#4a4a4a] text-[13.5px]">100%</span>
        <span className="ml-[16px] w-[10px] h-px bg-[#666]" />
        <div className="ml-[13px] w-[100px] h-px bg-[#777] relative">
          <span className="absolute left-[24px] -top-[6px] w-[5px] h-[12px] bg-[#666]" />
        </div>
        <svg className="ml-[13px]" width="11" height="11" viewBox="0 0 11 11" fill="none">
          <path d="M5.500 1v9M1 5.500h9" stroke="#666" />
        </svg>
        <svg className="ml-[20px]" width="16" height="16" viewBox="0 0 16 16" fill="none">
          <path d="M8 0l2.500 3h-5zM8 16l2.500-3h-5zM0 8l3-2.500v5zM16 8l-3-2.500v5z" fill="#555" />
          <circle cx="8" cy="8" r="1.700" fill="#555" />
        </svg>
        <svg className="ml-[24px]" width="14" height="16" viewBox="0 0 14 16">
          <path d="M7 0c3.500 0 4.500 2.500 4.500 5 0 3 .5 5 2.500 7H0c2-2 2.500-4 2.500-7C2.500 2.500 3.500 0 7 0zM4.500 13h5A2.500 2.500 0 0 1 4.500 13z" fill="#3a2f36" />
        </svg>
        <svg className="ml-[14px] mr-[2px] mt-[10px]" width="11" height="11" viewBox="0 0 11 11">
          <path d="M8 1h2v2H8zM4 5h2v2H4zM8 5h2v2H8zM0 9h2v2H0zM4 9h2v2H4zM8 9h2v2H8z" fill="#999" />
        </svg>
      </div>
    </div>
  );
}

export default function App() {
  return (
    <div className="w-[1365px] h-[768px] overflow-hidden flex flex-col border-x border-b border-[#2b5797] bg-[#f0f0f0] [font-family:'Noto_Sans','Open_Sans',sans-serif]">
      <div className="h-[33px] shrink-0 -mx-px bg-[#2b5797] relative flex items-center text-white">
        <div className="ml-[9px] flex items-center gap-[12px]">
          <IconSave />
          <IconOpen />
          <IconUndo />
          <IconUndo dim />
        </div>
        <div className="absolute inset-0 pt-[6px] flex items-center justify-center text-[11.3px] pointer-events-none">Profile definition sample - Next Design</div>
        <div className="ml-auto flex items-center mr-[18px] gap-[34px]">
          <span className="w-[10px] h-px bg-white" />
          <span className="w-[10px] h-[10px] border border-white" />
          <svg width="10" height="10" viewBox="0 0 10 10" fill="none">
            <path d="M0 0l10 10M10 0 0 10" stroke="#fff" />
          </svg>
        </div>
      </div>
      <Ribbon />
      <div className="flex-1 min-h-0 flex border-t border-[#c8c8c8]">
        <LeftPanel />
        <div className="flex-1 min-w-0 flex flex-col">
          <div className="h-[24px] shrink-0 flex items-start border-b-2 border-[#2b5797] bg-[#f0f0f0] text-[11.35px]">
            <div className="w-[178px] h-[22px] flex items-center pl-[5px] gap-[5px] text-[#333] whitespace-nowrap">
              <svg width="16" height="10" viewBox="0 0 16 10" fill="none">
                <ellipse cx="8" cy="5" rx="7.500" ry="4.500" stroke="#666" fill="#fff" />
              </svg>
              <span className="pt-[3px]">Driving at a constant speed</span>
            </div>
            <div className="w-[237px] h-[22px] bg-[#2b5797] text-white flex items-center pl-[6px] gap-[4px] whitespace-nowrap">
              <svg width="16" height="16" viewBox="0 0 16 16" fill="none" className="shrink-0">
                <rect x=".5" y=".5" width="15" height="15" stroke="#dfe7f1" fill="#2b5797" />
                <rect x="3" y="3" width="5" height="3.500" stroke="#fff" />
                <rect x="3" y="10" width="4" height="3" stroke="#fff" />
                <rect x="9" y="10" width="4" height="3" stroke="#fff" />
                <path d="M5 6.500V10M5 8h6v2" stroke="#fff" />
              </svg>
              <span className="pt-[3px]">Use Case Model Structure Diagram</span>
              <svg className="ml-auto mr-[6px]" width="10" height="10" viewBox="0 0 10 10" fill="none">
                <path d="M0 0l10 10M10 0 0 10" stroke="#c6d3e6" />
              </svg>
            </div>
            <svg className="ml-auto mr-[5px] mt-[10px]" width="9" height="5" viewBox="0 0 9 5" fill="none">
              <path d="M.5.500 4.500 4l4-3.500" stroke="#777" />
            </svg>
          </div>
          <Canvas />
        </div>
      </div>
      <StatusBar />
    </div>
  );
}
